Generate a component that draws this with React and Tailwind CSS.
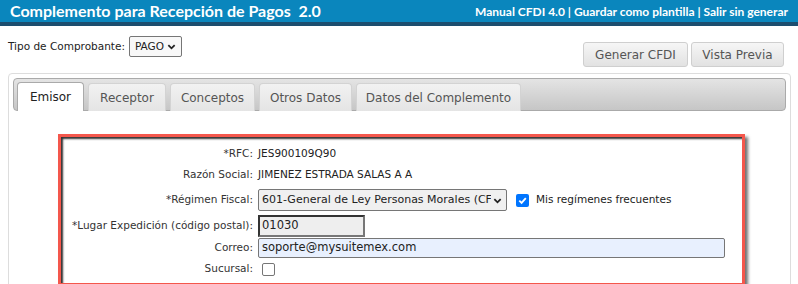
import React from "react";

const tahoma = { fontFamily: '"DejaVu Sans", Verdana, sans-serif' };

const Chevron = ({ className = "" }) => (
  <svg viewBox="0 0 10 10" className={className} fill="none" stroke="currentColor" strokeWidth="2">
    <path d="M1.5 3.5 L5 7 L8.5 3.5" />
  </svg>
);

const tabs = [
  { name: "Emisor", w: "w-[67px]" },
  { name: "Receptor", w: "w-[78px]" },
  { name: "Conceptos", w: "w-[85px]" },
  { name: "Otros Datos", w: "w-[93px]" },
  { name: "Datos del Complemento", w: "w-[165px]" },
];

const Row = ({ label, children }) => (
  <>
    <div className="text-right text-[#333] whitespace-nowrap">{label}</div>
    <div className="flex items-center min-h-0">{children}</div>
  </>
);

export default function App() {
  return (
    <div className="w-[798px] h-[284px] overflow-hidden bg-white text-[10.5px] text-[#222]" style={tahoma}>
      {/* header */}
      <div className="h-[26px] flex items-start justify-between bg-[#0a86bd] border-b-[4px] border-[#1c4d6e] pl-[10px] pr-[10px]">
        <div className="text-white font-bold text-[16px] leading-[22px] [font-family:Lato,sans-serif] whitespace-pre">
          Complemento para Recepción de Pagos  2.0
        </div>
        <div className="text-white font-bold text-[12px] leading-[22px] [font-family:Lato,sans-serif] pt-[1px]">
          Manual CFDI 4.0 | Guardar como plantilla | Salir sin generar
        </div>
      </div>

      {/* toolbar */}
      <div className="flex justify-between pl-[8px] pr-[14px]">
        <div className="flex items-center gap-[4px] pt-[10px] h-[31px]">
          <span>Tipo de Comprobante:</span>
          <div className="h-[21px] w-[53px] border border-[#767676] rounded-[2px] bg-[#f8f8f8] flex items-center justify-between px-[5px]">
            <span>PAGO</span>
            <Chevron className="w-[9px] h-[9px]" />
          </div>
        </div>
        <div className="flex gap-[3px] pt-[16px]">
          <div className="h-[25px] w-[105px] flex items-center justify-center border border-[#cfcfcf] rounded-[3px] bg-gradient-to-b from-[#f6f6f6] to-[#e2e2e2] text-[#555] text-[12px]">
            Generar CFDI
          </div>
          <div className="h-[25px] w-[93px] flex items-center justify-center border border-[#cfcfcf] rounded-[3px] bg-gradient-to-b from-[#f6f6f6] to-[#e2e2e2] text-[#555] text-[12px]">
            Vista Previa
          </div>
        </div>
      </div>

      {/* tabs panel */}
      <div className="mx-[8px] mt-[6px] w-[783px] h-[300px] border border-[#dddddd] rounded-[4px] p-[4px]">
        <div className="h-[33px] border border-[#aaaaaa] rounded-[4px] bg-gradient-to-b from-[#e4e4e4] to-[#c6c6c6] flex items-end gap-[4px] pl-[3px]">
          {tabs.map((t, i) =>
            i === 0 ? (
              <div
                key={t.name}
                className={`${t.w} h-[29px] -mb-px flex items-center justify-center bg-white border border-b-0 border-[#aaaaaa] rounded-t-[4px] text-[12px] text-[#222]`}
              >
                {t.name}
              </div>
            ) : (
              <div
                key={t.name}
                className={`${t.w} h-[28px] -mb-px flex items-center justify-center bg-gradient-to-b from-[#f2f2f2] to-[#e4e4e4] border border-b-0 border-[#d3d3d3] rounded-t-[4px] text-[12px] text-[#555]`}
              >
                {t.name}
              </div>
            )
          )}
        </div>

        {/* emisor form */}
        <div className="ml-[45px] mt-[23px] w-[687px] border-[3px] border-[#f4574c] shadow-[3px_3px_3px_rgba(0,0,0,0.55)]">
          <div className="shadow-[inset_2px_2px_2px_#333] pt-[7px] pb-[4px]">
            <div className="grid grid-cols-[192px_1fr] gap-x-[5px] items-center [grid-template-rows:20px_22px_28px_23px_22px_20px]">
              <Row label="*RFC:">JES900109Q90</Row>
              <Row label="Razón Social:">JIMENEZ ESTRADA SALAS A A</Row>
              <Row label="*Régimen Fiscal:">
                <div className="h-[22px] w-[249px] border border-[#767676] rounded-[2px] bg-[#f0f0f0] flex items-center pl-[3px] pr-[4px] overflow-hidden">
                  <span className="flex-1 whitespace-nowrap overflow-hidden text-[11px]">601-General de Ley Personas Morales (CFDI)</span>
                  <Chevron className="w-[9px] h-[9px] shrink-0 ml-[2px]" />
                </div>
                <div className="ml-[9px] w-[13px] h-[13px] rounded-[2px] bg-[#0075ff] flex items-center justify-center">
                  <svg viewBox="0 0 12 12" className="w-[11px] h-[11px]" fill="none" stroke="white" strokeWidth="2">
                    <path d="M2.5 6.2 L5 8.6 L9.6 3.4" />
                  </svg>
                </div>
                <span className="ml-[7px]">Mis regímenes frecuentes</span>
              </Row>
              <Row label="*Lugar Expedición (código postal):">
                <div className="h-[22px] w-[107px] border-2 border-[#333] border-r-[#777] border-b-[#777] bg-[#eeeeee] flex items-center pl-[2px] text-[11.5px]">
                  01030
                </div>
              </Row>
              <Row label="Correo:">
                <div className="h-[20px] w-[467px] border border-[#767676] rounded-[2px] bg-[#e8f0fe] flex items-center pl-[3px] text-[11.5px]">
                  soporte@mysuitemex.com
                </div>
              </Row>
              <Row label="Sucursal:">
                <div className="ml-[4px] w-[13px] h-[13px] rounded-[2px] border border-[#767676] bg-white" />
              </Row>
            </div>
          </div>
        </div>
      </div>
    </div>
  );
}
